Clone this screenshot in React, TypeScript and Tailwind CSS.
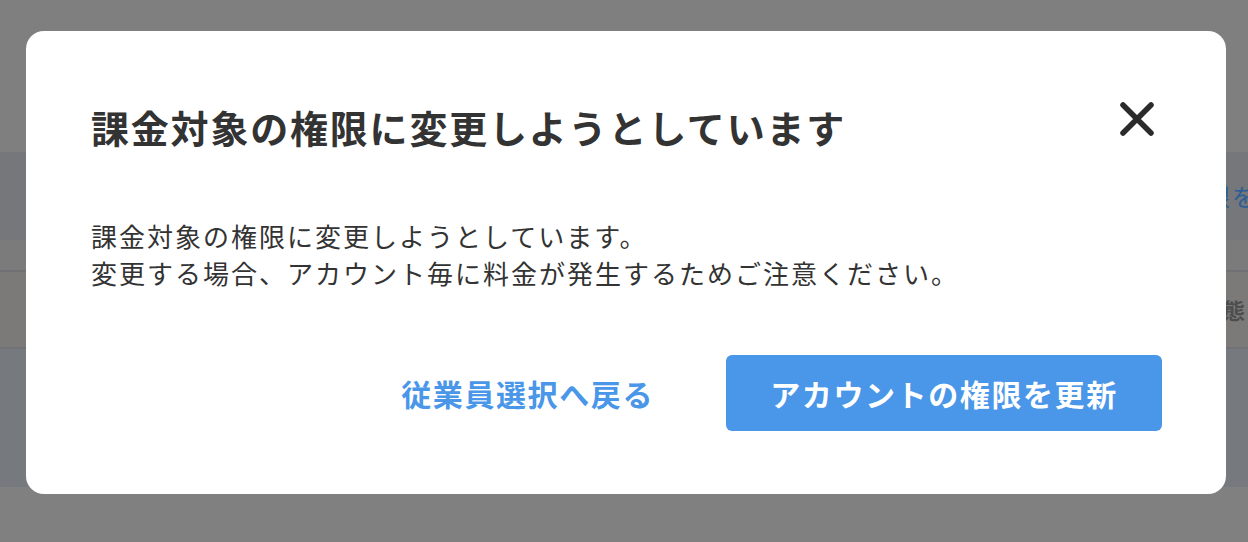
import { useState } from "react";

const jp = { fontFamily: '"Noto Sans CJK JP", "Noto Sans", sans-serif' };

// Background page rows (already dimmed by the overlay)
function BackdropPage() {
  return (
    <div className="flex h-full w-full flex-col overflow-hidden" style={jp}>
      <div className="h-[152px] bg-[#7f7f7f]" />
      <div className="flex h-[88px] items-center justify-end bg-[#76777a]">
        <span className="mr-[-10px] text-[24px] tracking-[2px] text-[#2c5d96]">限を</span>
      </div>
      <div className="h-[32px] border-b-2 border-[#707174] bg-[#7b7b7b]" />
      <div className="flex h-[77px] items-center justify-end border-b-2 border-[#717275] bg-[#7b7a79]">
        <span className="mr-[3px] text-[22px] font-bold text-[#4d4d4d]">状態</span>
      </div>
      <div className="h-[138px] bg-[#76797d]" />
      <div className="flex-1 bg-[#808080]" />
    </div>
  );
}

function CloseIcon() {
  return (
    <svg width="36" height="36" viewBox="0 0 36 36" fill="none">
      <path
        d="M4 4 L32 32 M32 4 L4 32"
        stroke="#2b2b2b"
        strokeWidth="5.5"
        strokeLinecap="round"
      />
    </svg>
  );
}

export default function App() {
  const [open, setOpen] = useState(true);

  return (
    <div className="relative h-[542px] w-[1248px] overflow-hidden bg-[#7f7f7f]">
      <BackdropPage />

      {open && (
        <div
          className="absolute left-[26px] top-[31px] flex h-[463px] w-[1200px] flex-col rounded-[18px] bg-white pl-[65px] pr-[64px] pt-[72px]"
          style={jp}
        >
          {/* header */}
          <div className="flex h-[48px] items-center justify-between">
            <h2 className="text-[38px] font-bold leading-[48px] tracking-[1.8px] text-[#333333]">
              課金対象の権限に変更しようとしています
            </h2>
            <button
              type="button"
              onClick={() => setOpen(false)}
              className="mr-[7px] mt-[-16px] flex items-center justify-center"
            >
              <CloseIcon />
            </button>
          </div>

          {/* body */}
          <div className="mt-[66px] text-[26px] leading-[37px] tracking-[2px] text-[#333333]">
            <p>課金対象の権限に変更しようとしています。</p>
            <p>変更する場合、アカウント毎に料金が発生するためご注意ください。</p>
          </div>

          {/* actions */}
          <div className="mt-[64px] flex items-center justify-end gap-[72px]">
            <button
              type="button"
              className="text-[30px] font-bold tracking-[1.6px] text-[#4a96e8]"
            >
              従業員選択へ戻る
            </button>
            <button
              type="button"
              className="flex h-[76px] w-[436px] items-center justify-center rounded-[6px] bg-[#4a96e8] text-[30px] font-bold tracking-[1.6px] text-white"
            >
              アカウントの権限を更新
            </button>
          </div>
        </div>
      )}
    </div>
  );
}
